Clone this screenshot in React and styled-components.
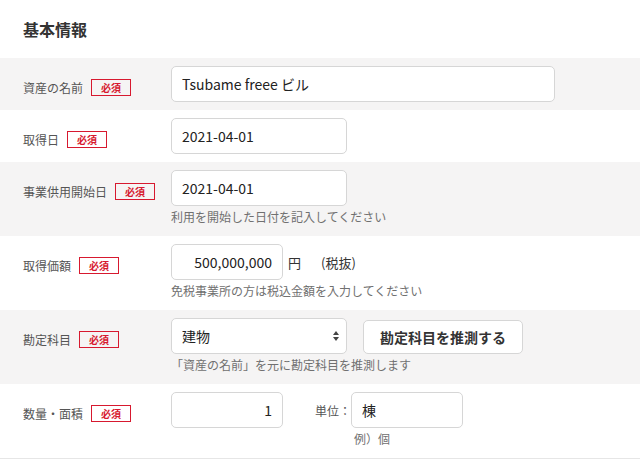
import React from 'react';
import styled, { createGlobalStyle } from 'styled-components';

const GlobalStyle = createGlobalStyle`
  body {
    margin: 0;
    background: #fff;
    font-family: "Noto Sans CJK JP", "Noto Sans", sans-serif;
    color: #333;
  }
`;

const Page = styled.div`
  width: 640px;
`;

const Title = styled.h2`
  margin: 0;
  height: 58px;
  padding: 0 23px;
  display: flex;
  align-items: center;
  font-size: 16px;
  font-weight: 700;
  color: #333;
`;

const Rows = styled.div`
  border-bottom: 1px solid #e6e6e6;
`;

const Row = styled.div`
  display: grid;
  grid-template-columns: 171px 1fr;
  padding: 8px 0;
  background: ${(p) => (p.$shaded ? '#f5f4f4' : '#fff')};
`;

const LabelCell = styled.div`
  display: flex;
  align-items: center;
  gap: 8px;
  height: 36px;
  padding: 6px 0 0 23px;
  box-sizing: border-box;
  font-size: 12px;
  color: #555;
`;

const Required = styled.span`
  display: inline-block;
  width: 40px;
  height: 17px;
  box-sizing: border-box;
  border: 1px solid #d7192f;
  color: #d7192f;
  font-size: 10px;
  font-weight: 700;
  line-height: 15px;
  text-align: center;
`;

const Field = styled.div`
  display: flex;
  flex-direction: column;
  align-items: flex-start;
`;

const Inline = styled.div`
  display: flex;
  align-items: ${(p) => (p.$top ? 'flex-start' : 'center')};
`;

const TextInput = styled.input`
  width: ${(p) => p.$w}px;
  height: 36px;
  box-sizing: border-box;
  border: 1px solid #d6d6d6;
  border-radius: 5px;
  background: #fff;
  padding: 0 10px;
  font-family: inherit;
  font-size: 14px;
  color: #222;
  text-align: ${(p) => (p.$right ? 'right' : 'left')};
  outline: none;
`;

const Help = styled.div`
  font-size: 12px;
  line-height: 22px;
  color: #707070;
  padding-left: ${(p) => p.$indent || 0}px;
`;

const Unit = styled.span`
  font-size: 13px;
  color: #333;
  margin-left: ${(p) => p.$gap}px;
`;

const SelectWrap = styled.div`
  position: relative;
  width: 176px;
  height: 36px;
`;

const Select = styled.select`
  appearance: none;
  width: 100%;
  height: 100%;
  box-sizing: border-box;
  border: 1px solid #d6d6d6;
  border-radius: 5px;
  background: #fff;
  padding: 0 10px;
  font-family: inherit;
  font-size: 14px;
  color: #222;
  outline: none;
`;

const Arrows = styled.svg`
  position: absolute;
  right: 8px;
  top: 13px;
  pointer-events: none;
`;

const GuessButton = styled.button`
  margin: 2px 0 0 16px;
  width: 160px;
  height: 34px;
  box-sizing: border-box;
  border: 1px solid #d6d6d6;
  border-radius: 5px;
  background: #fff;
  font-family: inherit;
  font-size: 14px;
  font-weight: 700;
  color: #333;
`;

const SideLabel = styled.span`
  display: flex;
  align-items: center;
  height: 36px;
  margin-left: 32px;
  font-size: 12px;
  color: #555;
`;

function Label({ children }) {
  return (
    <LabelCell>
      {children}
      <Required>必須</Required>
    </LabelCell>
  );
}

export default function App() {
  return (
    <Page>
      <GlobalStyle />
      <Title>基本情報</Title>
      <Rows>
        <Row $shaded>
          <Label>資産の名前</Label>
          <Field>
            <TextInput $w={384} defaultValue="Tsubame freee ビル" />
          </Field>
        </Row>

        <Row>
          <Label>取得日</Label>
          <Field>
            <TextInput $w={176} defaultValue="2021-04-01" />
          </Field>
        </Row>

        <Row $shaded>
          <Label>事業供用開始日</Label>
          <Field>
            <TextInput $w={176} defaultValue="2021-04-01" />
            <Help>利用を開始した日付を記入してください</Help>
          </Field>
        </Row>

        <Row>
          <Label>取得価額</Label>
          <Field>
            <Inline>
              <TextInput $w={112} $right defaultValue="500,000,000" />
              <Unit $gap={5}>円</Unit>
              <Unit $gap={20}>(税抜)</Unit>
            </Inline>
            <Help>免税事業所の方は税込金額を入力してください</Help>
          </Field>
        </Row>

        <Row $shaded>
          <Label>勘定科目</Label>
          <Field>
            <Inline $top>
              <SelectWrap>
                <Select defaultValue="建物">
                  <option>建物</option>
                </Select>
                <Arrows width="6" height="10" viewBox="0 0 6 10">
                  <path d="M3 0L6 4H0z M3 10L0 6H6z" fill="#444" />
                </Arrows>
              </SelectWrap>
              <GuessButton type="button">勘定科目を推測する</GuessButton>
            </Inline>
            <Help>「資産の名前」を元に勘定科目を推測します</Help>
          </Field>
        </Row>

        <Row>
          <Label>数量・面積</Label>
          <Inline $top>
            <TextInput $w={112} $right defaultValue="1" />
            <SideLabel>単位：</SideLabel>
            <Field>
              <TextInput $w={112} defaultValue="棟" />
              <Help $indent={3}>例）個</Help>
            </Field>
          </Inline>
        </Row>
      </Rows>
    </Page>
  );
}
